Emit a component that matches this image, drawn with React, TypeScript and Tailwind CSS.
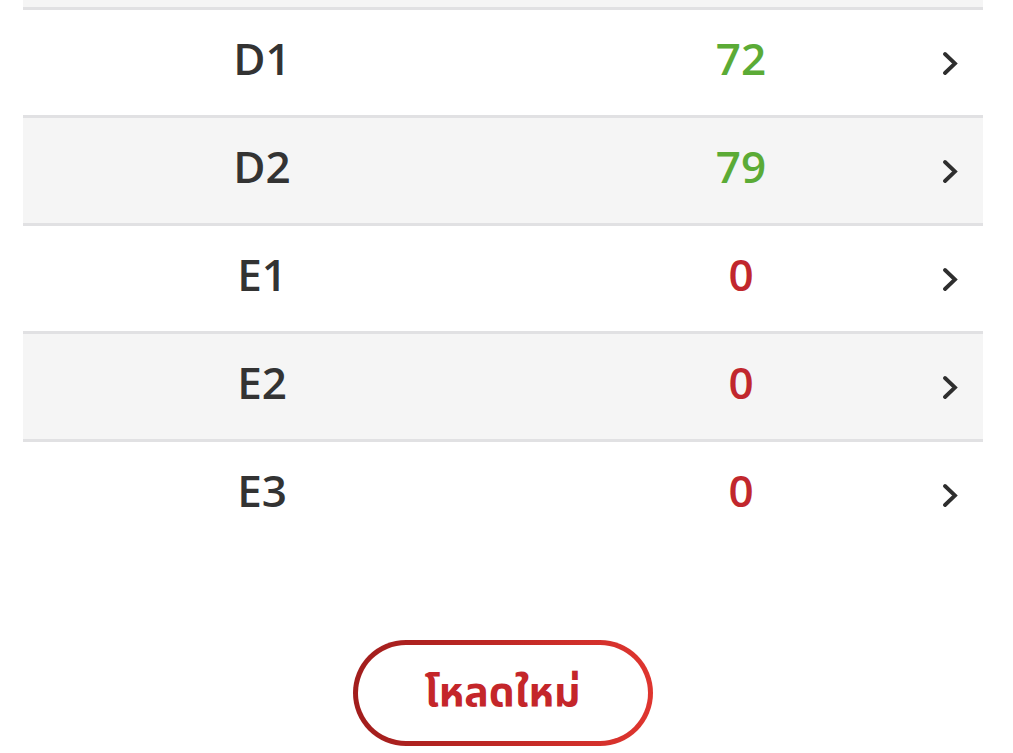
import React from "react";

type Row = { name: string; score: number; pass: boolean; shaded: boolean };

const rows: Row[] = [
  { name: "D1", score: 72, pass: true, shaded: false },
  { name: "D2", score: 79, pass: true, shaded: true },
  { name: "E1", score: 0, pass: false, shaded: false },
  { name: "E2", score: 0, pass: false, shaded: true },
  { name: "E3", score: 0, pass: false, shaded: false },
];

function Chevron() {
  return (
    <svg width="16" height="24" viewBox="0 0 16 24" fill="none">
      <polyline
        points="3,3 13,12.5 3,22"
        stroke="#2e2e2e"
        strokeWidth="3.8"
        strokeLinecap="round"
        strokeLinejoin="miter"
      />
    </svg>
  );
}

function ScoreRow({ row, last }: { row: Row; last: boolean }) {
  return (
    <div
      className={`relative flex h-[105px] items-center ${row.shaded ? "bg-[#f5f5f5]" : "bg-white"} ${
        last ? "" : "border-b-[3px] border-[#e1e1e3]"
      } box-content`}
    >
      <div className="w-[478px] text-center text-[44px] font-semibold leading-none text-[#333333] -mt-[10px]">
        {row.name}
      </div>
      <div
        className={`w-[480px] text-center text-[44px] font-semibold leading-none -mt-[10px] ${
          row.pass ? "text-[#5bab36]" : "text-[#c1272d]"
        }`}
      >
        {row.score}
      </div>
      <div className="absolute right-[25px] top-[41px]">
        <Chevron />
      </div>
    </div>
  );
}

export default function App() {
  return (
    <div
      className="min-h-[753px] w-[1013px] bg-white"
      style={{ fontFamily: "'Open Sans', 'Noto Sans', 'Noto Sans Thai', sans-serif" }}
    >
      <div className="mx-[23px] w-[960px]">
        <div className="h-[7px] border-b-[3px] border-[#e1e1e3] bg-[#f5f5f5] box-content" />
        {rows.map((r, i) => (
          <ScoreRow key={r.name} row={r} last={i === rows.length - 1} />
        ))}
      </div>
      <div className="mt-[93px] flex justify-center">
        <button
          className="ml-[-8px] flex h-[106px] w-[300px] items-center justify-center rounded-full border-[5px] border-transparent pb-[4px] text-[41px] font-bold text-[#c4262a] [background:linear-gradient(#fff,#fff)_padding-box,linear-gradient(90deg,#a11d1c,#df352f)_border-box]"
        >
          โหลดใหม่
        </button>
      </div>
    </div>
  );
}
